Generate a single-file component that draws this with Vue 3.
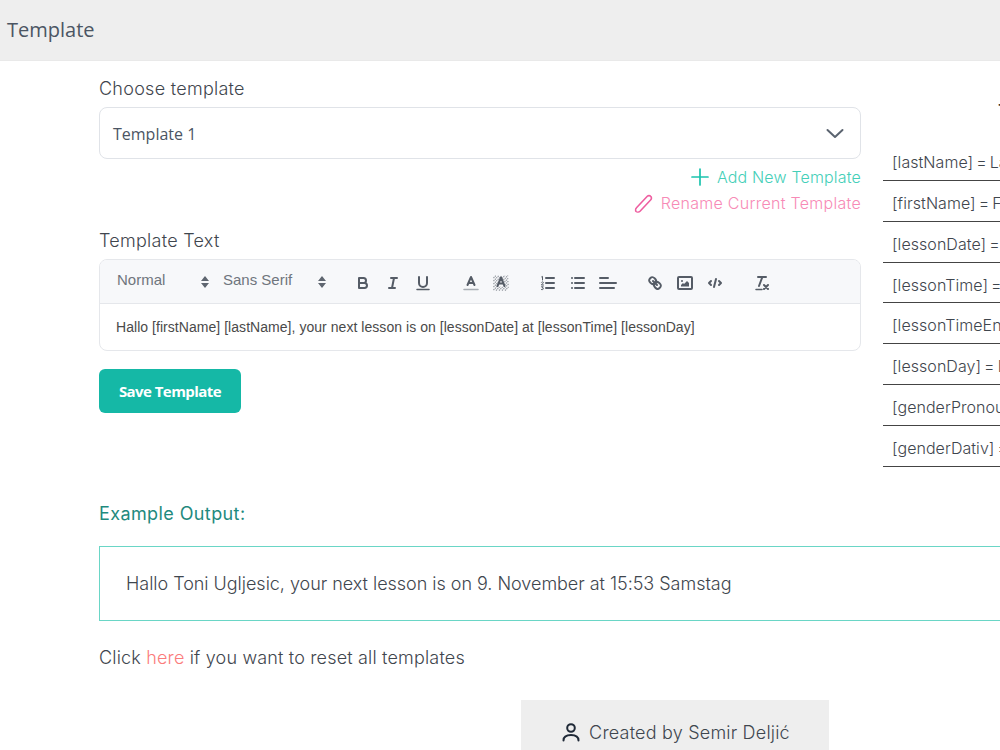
<script setup>
const rows = [
  '[lastName] = Last Name',
  '[firstName] = First Name',
  '[lessonDate] = Date of lesson',
  '[lessonTime] = Time of lesson',
  '[lessonTimeEnd] = End of lesson',
  '[lessonDay] = Day of lesson',
  '[genderPronoun] = Pronoun',
  '[genderDativ] = Dativ'
]
</script>

<template>
  <div class="page">
    <header class="topbar"><h1>Template</h1></header>

    <div class="content">
      <div class="columns">
        <section class="left">
          <label class="label first">Choose template</label>
          <div class="select">
            <span>Template 1</span>
            <svg width="20" height="20" viewBox="0 0 20 20" fill="none" stroke="#5b6470" stroke-width="2" stroke-linecap="round" stroke-linejoin="round"><path d="M2.500 6 10 13l7.500-7" /></svg>
          </div>

          <div class="actions">
            <a class="action add">
              <svg width="20" height="20" viewBox="0 0 20 20" fill="none" stroke="#1cc4ae" stroke-width="1.700" stroke-linecap="round"><path d="M10 2v16M2 10h16" /></svg>
              Add New Template
            </a>
            <a class="action rename">
              <svg width="20" height="20" viewBox="0 0 20 20" fill="none" stroke="#ee5ea0" stroke-width="1.600" stroke-linejoin="round"><path d="M2.500 14.800 13.300 3.300a2.400 2.400 0 0 1 3.400 0 2.400 2.400 0 0 1 .1 3.400L6 18.200c-1 1-3 1.100-3.900.3-.8-.8-.6-2.700.4-3.700Z" /></svg>
              Rename Current Template
            </a>
          </div>

          <label class="label second">Template Text</label>
          <div class="editor">
            <div class="toolbar">
              <span class="picker one"><span class="picker-text">Normal</span>
                <svg width="10" height="14" viewBox="0 0 10 14" fill="#5f6670"><path d="M5 1 9 6H1ZM5 13 1 8h8Z" /></svg>
              </span>
              <span class="picker two"><span class="picker-text">Sans Serif</span>
                <svg width="10" height="14" viewBox="0 0 10 14" fill="#5f6670"><path d="M5 1 9 6H1ZM5 13 1 8h8Z" /></svg>
              </span>

              <div class="group g1">
                <svg class="ql" viewBox="0 0 18 18"><path d="M5 4h4.500a2.500 2.500 0 0 1 0 5H5Z" /><path d="M5 9h5.500a2.500 2.500 0 0 1 0 5H5Z" /></svg>
                <svg class="ql" viewBox="0 0 18 18"><path d="M7 4h6M5 14h6M8 14l2-10" /></svg>
                <svg class="ql" viewBox="0 0 18 18"><path d="M5 3v6a4 4 0 0 0 4 4 4 4 0 0 0 4-4V3" /><path class="thin" d="M3 15.500h12" /></svg>
              </div>
              <div class="group g2">
                <svg class="ql" viewBox="0 0 18 18"><path class="faint" d="M2 15.500h14" /><path d="M5.500 11 9 3l3.500 8M6.400 9h5.200" /></svg>
                <svg class="ql" viewBox="0 0 18 18">
                  <path class="hatch" d="M1.500 4 4 1.500M1.500 7 7 1.500M1.500 10 10 1.500M1.500 13 13 1.500M1.500 16 16 1.500M4 16.500 16.500 4M7 16.500 16.500 7M10 16.500l6.500-6.500M13 16.500l3.500-3.500" />
                  <path class="knock" d="M4.500 12.500 9 2l4.500 10.500Z" />
                  <path d="M5.500 12 9 3.500l3.500 8.500M6.400 9.500h5.200" />
                </svg>
              </div>
              <div class="group">
                <svg class="ql" viewBox="0 0 18 18"><path d="M7 4h8M7 9h8M7 14h8" /><path class="tiny" d="M2.700 2.800 3.500 2.400V6M2.500 8.300c.4-.7 2-.6 1.900.4 0 .8-1.900 1.300-2 2.300h2.100M2.500 12.800h1.800l-1 1.100c1.700 0 1.500 2.300-.8 1.700" /></svg>
                <svg class="ql" viewBox="0 0 18 18"><path d="M6 4h9M6 9h9M6 14h9M3 4h.01M3 9h.01M3 14h.01" /></svg>
                <svg class="ql" viewBox="0 0 18 18"><path d="M1 9h16M1 14h14M1 4h8" /></svg>
              </div>
              <div class="group">
                <svg class="ql" viewBox="0 0 18 18"><path d="m7 7 4 4" /><path d="M8.900 4.577a3.476 3.476 0 0 1 .36 4.679A3.476 3.476 0 0 1 4.577 8.900C3.185 7.500 2.035 6.400 4.217 4.217S7.500 3.185 8.900 4.577Z" /><path d="M13.423 9.100a3.476 3.476 0 0 0-4.679-.36 3.476 3.476 0 0 0 .36 4.679c1.392 1.392 2.500 2.542 4.679.36s1.032-3.279-.36-4.679Z" /></svg>
                <svg class="ql" viewBox="0 0 18 18"><rect x="2" y="3" width="14" height="12" rx="1" /><circle class="solid" cx="6" cy="7" r="1" /><path class="solid" d="M5 12.500v-1.500l2-2 1 1 3-3 2 2v3.500Z" /></svg>
                <svg class="ql" viewBox="0 0 18 18"><path d="M5 7 3 9l2 2M13 7l2 2-2 2M10 5l-2 8" /></svg>
              </div>
              <div class="group">
                <svg class="ql" viewBox="0 0 18 18"><path d="M5 3h8M6 12 9.350 3M11 11l4 4M15 11l-4 4" /><path class="thin" d="M3 15.500h6" /></svg>
              </div>
            </div>
            <div class="body">Hallo [firstName] [lastName], your next lesson is on [lessonDate] at [lessonTime] [lessonDay]</div>
          </div>

          <button class="save">Save Template</button>
        </section>

        <aside class="right">
          <h3 class="vars-title">Template Variables</h3>
          <div v-for="row in rows" :key="row" class="var-row">{{ row }}</div>
        </aside>
      </div>

      <h4 class="example-title">Example Output:</h4>
      <div class="example">Hallo Toni Ugljesic, your next lesson is on 9. November at 15:53 Samstag</div>
      <p class="reset">Click <a>here</a> if you want to reset all templates</p>
    </div>

    <footer class="footer-wrap">
      <div class="footer">
        <svg width="22" height="22" viewBox="0 0 22 22" fill="none" stroke="#1f2937" stroke-width="2" stroke-linecap="round"><circle cx="11" cy="7" r="3.800" /><path d="M3.500 19.500c0-3.600 3-5.500 7.500-5.500s7.500 1.900 7.500 5.500" /></svg>
        <span>Created by Semir Deljić</span>
      </div>
    </footer>
  </div>
</template>

<style>
html, body { margin: 0; overflow: hidden; height: 750px; background: #fff; }
</style>

<style scoped>
.page { width: 1350px; font-family: Inter, "Liberation Sans", sans-serif; font-weight: 300; color: #3f464e; }
.topbar { height: 61px; box-sizing: border-box; background: #eeeeee; border-bottom: 1px solid #e9e9e9; display: flex; align-items: center; padding: 0 0 0 7px; }
.topbar h1 { margin: 0; font: 400 20px/30px "Open Sans", sans-serif; color: #4b5563; }
.content { padding-left: 99px; }
.columns { display: flex; gap: 22px; }
.left { width: 762px; flex: none; }
.label { display: block; font-size: 18px; line-height: 24px; letter-spacing: .27px; margin-bottom: 6px; }
.label.first { margin-top: 16px; }
.label.second { margin-top: 13px; }
.select { height: 52px; box-sizing: border-box; border: 1px solid #e0e3e8; border-radius: 8px; display: flex; align-items: center; justify-content: space-between; padding: 2px 15px 0 13px; font: 400 16px "Open Sans", sans-serif; color: #4b5563; }
.actions { margin-top: 5px; display: flex; flex-direction: column; align-items: flex-end; }
.action { height: 26px; display: flex; align-items: center; font-size: 16px; }
.add { color: #45cfb8; gap: 7px; letter-spacing: .17px; }
.rename { color: #f78ab6; gap: 7px; letter-spacing: .28px; }
.editor { height: 92px; box-sizing: border-box; border: 1px solid #e5e7eb; border-radius: 8px; overflow: hidden; }
.toolbar { height: 44px; box-sizing: border-box; background: #f7f8fa; border-bottom: 1px solid #e5e7eb; display: flex; align-items: center; font: 400 15px "Liberation Sans", sans-serif; color: #6f757d; }
.picker { display: flex; align-items: center; justify-content: space-between; height: 30px; }
.picker-text { padding-bottom: 4px; }
.picker.one { margin-left: 17px; width: 93px; }
.picker.two { margin-left: 13px; width: 104px; }
.picker svg { margin-top: 1px; }
.group { display: flex; gap: 12px; margin-left: 29px; margin-top: 3px; }
.group.g1 { margin-left: 27px; }
.group.g2 { margin-left: 30px; }
.ql { width: 18px; height: 18px; fill: none; stroke: #555c66; stroke-width: 2; stroke-linecap: round; stroke-linejoin: round; flex: none; }
.ql .thin { stroke-width: 1.500; }
.ql .faint { stroke: #a9aeb5; stroke-width: 1.500; }
.ql .hatch { stroke: #8d9299; stroke-width: 1.200; stroke-dasharray: 1.200 .8; stroke-linecap: butt; }
.ql .knock { fill: #f7f8fa; stroke: none; }
.ql .tiny { stroke-width: 1; }
.ql .solid { fill: #555c66; stroke: none; }
.body { padding: 14px 16px; font: 400 14px/19px "Liberation Sans", sans-serif; letter-spacing: .045px; color: #4a4a4a; white-space: nowrap; }
.save { display: block; margin-top: 18px; width: 142px; height: 44px; border: 0; border-radius: 6px; background: #15b8a6; color: #fff; font: 700 15px "Open Sans", sans-serif; letter-spacing: -.55px; padding: 0; }
.right { width: 430px; flex: none; }
.vars-title { margin: 38px 0 17px; padding-left: 115px; font-size: 17px; line-height: 24px; font-weight: 500; color: #333; white-space: nowrap; }
.var-row { height: 40.860px; box-sizing: border-box; border-bottom: 1px solid #444; padding: 10px 0 0 9px; font-size: 16px; letter-spacing: .05px; word-spacing: -1.500px; line-height: 24px; white-space: nowrap; overflow: hidden; }
.example-title { margin: 0 0 20px; padding-top: 35px; font-size: 18px; line-height: 24px; font-weight: 400; letter-spacing: .4px; color: #1f8a7e; }
.example { height: 75px; box-sizing: border-box; border: 1px solid #6ad6c6; padding-left: 26px; display: flex; align-items: center; font-size: 18px; letter-spacing: -.03px; }
.reset { margin: 25px 0 0; font-size: 18px; letter-spacing: .17px; line-height: 24px; }
.reset a { color: #fb7c7c; }
.footer-wrap { display: flex; justify-content: center; margin-top: 30px; }
.footer { width: 308px; height: 66px; background: #eeeeee; display: flex; align-items: flex-start; justify-content: center; gap: 7px; padding-top: 21px; box-sizing: border-box; font-size: 18px; letter-spacing: .2px; line-height: 24px; }
</style>
